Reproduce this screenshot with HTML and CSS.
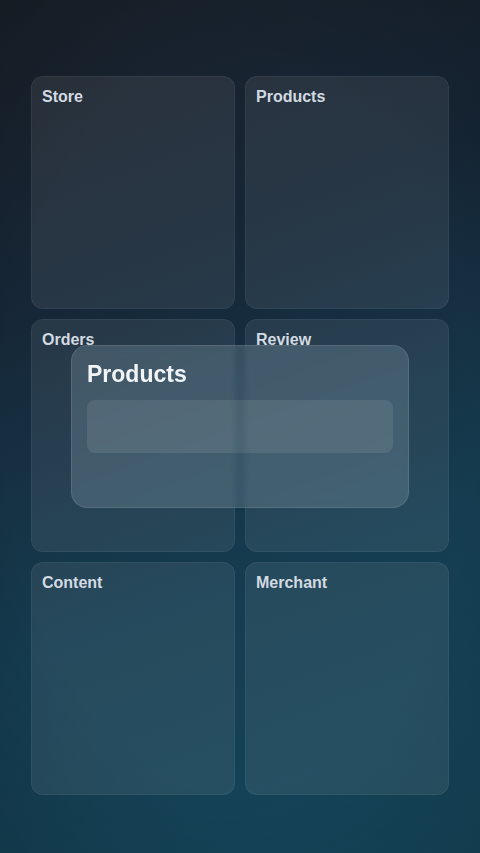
FILE: index.html
```html
<!DOCTYPE html>
<html>
<head>
<meta charset="utf-8">
<link rel="stylesheet" href="styles.css">
</head>
<body>
<div class="screen">
  <div class="grid">
    <div class="tile"><span class="label">Store</span></div>
    <div class="tile"><span class="label">Products</span></div>
    <div class="tile"><span class="label">Orders</span></div>
    <div class="tile"><span class="label">Review</span></div>
    <div class="tile"><span class="label">Content</span></div>
    <div class="tile"><span class="label">Merchant</span></div>
  </div>
  <div class="popup">
    <h2 class="popup-title">Products</h2>
    <div class="popup-field"></div>
  </div>
</div>
</body>
</html>
```
FILE: styles.css
```css
html, body {
  margin: 0;
  padding: 0;
  width: 480px;
  height: 853px;
  overflow: hidden;
}
body {
  font-family: "Liberation Sans", Arial, sans-serif;
}
.screen {
  position: relative;
  width: 480px;
  height: 853px;
  box-sizing: border-box;
  padding: 76px 31px 0 31px;
  background:
    radial-gradient(ellipse 80% 70% at 50% 50%, rgba(0,0,0,0) 60%, rgba(0,0,0,0.16) 100%),
    linear-gradient(160deg, #192029 0%, #162636 30%, #153c50 65%, #15465b 100%);
}
.grid {
  display: grid;
  grid-template-columns: 204px 204px;
  grid-template-rows: repeat(3, 233px);
  gap: 10px;
}
.tile {
  background: rgba(255,255,255,0.075);
  border: 1px solid rgba(255,255,255,0.05);
  border-radius: 12px;
  padding: 11px 10px;
  box-sizing: border-box;
}
.label {
  display: block;
  font-size: 16px;
  font-weight: bold;
  color: #d3dae1;
  line-height: 18px;
}
.popup {
  position: absolute;
  left: 71px;
  top: 345px;
  width: 338px;
  height: 163px;
  box-sizing: border-box;
  padding: 14px 15px;
  border-radius: 16px;
  background: rgba(140,165,180,0.28);
  border: 1px solid rgba(255,255,255,0.1);
  backdrop-filter: blur(3px);
}
.popup-title {
  margin: 0;
  font-size: 23px;
  font-weight: bold;
  color: #f2f5f7;
  line-height: 28px;
}
.popup-field {
  margin-top: 12px;
  height: 53px;
  border-radius: 8px;
  background: rgba(255,255,255,0.09);
}
```
